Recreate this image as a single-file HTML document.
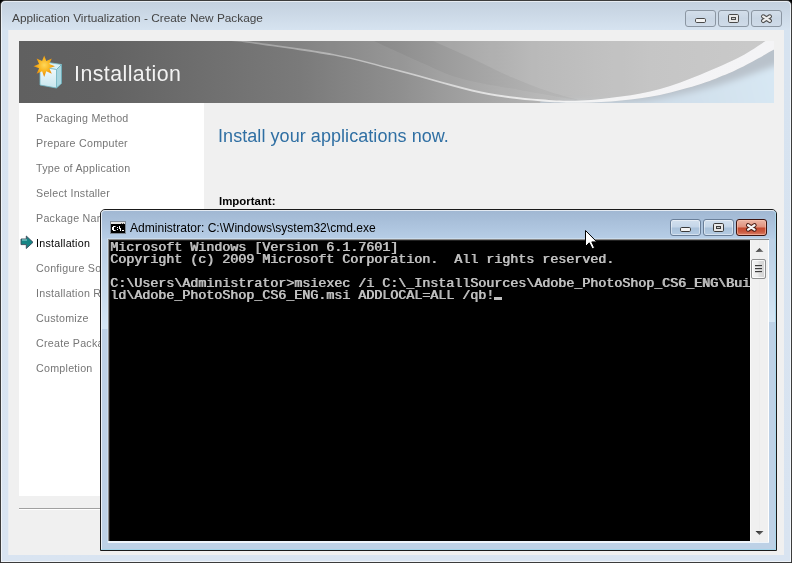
<!DOCTYPE html>
<html><head><meta charset="utf-8">
<style>
*{margin:0;padding:0;box-sizing:border-box}
html,body{width:792px;height:563px;overflow:hidden;background:#000}
.gs{will-change:transform}
body{position:relative;font-family:"Liberation Sans",sans-serif}
.a{position:absolute}
.t{position:absolute;white-space:nowrap;line-height:1;will-change:transform}
#win{left:0;top:0;width:792px;height:563px;border:1px solid #3c3c3c;border-radius:5px 5px 0 0;
 background:linear-gradient(#c3d0de 0px,#d6e3f0 29px,#d7e3f0 60px,#d9e4f1 563px)}
#winhl{left:1px;top:1px;width:790px;height:561px;border:1px solid rgba(255,255,255,.6);border-radius:4px 4px 0 0}
#client{left:8px;top:30px;width:776px;height:525px;background:#f0f0f0;border-left:1px solid #e9edf2}
.btn{position:absolute;height:17px;width:31px;border:1px solid #8b96a2;border-radius:3px;background:linear-gradient(#d3deea,#c9d6e4 50%,#cfdbe8)}
.abtn{position:absolute;height:17px;width:31px;border:1px solid #6a7f99;border-radius:3px;box-shadow:inset 0 0 0 1px rgba(255,255,255,.45);background:linear-gradient(#d2e0ee 0,#c4d5e8 7px,#a9c1da 8px,#b5cce3 15px,#c8dbee 17px)}
.cbtn{position:absolute;height:17px;width:31px;border:1px solid #3e1510;border-radius:3px;box-shadow:inset 0 0 0 1px rgba(255,200,180,.55);background:linear-gradient(#ebb6a6 0,#e0927e 7px,#c4492e 8px,#cc5c42 12px,#e09078 16px)}
.nav{position:absolute;white-space:nowrap;line-height:1;will-change:transform;left:36px;font-size:10.7px;letter-spacing:0.25px;color:#767676}
#con{position:absolute;left:110px;top:242px;font-family:"Liberation Mono",monospace;font-size:13.333px;line-height:12px;color:#c0c0c0;white-space:pre;font-weight:normal;text-shadow:0.8px 0 0 #c0c0c0}
</style></head><body>
<div id="win" class="a"></div>
<div id="winhl" class="a"></div>
<div class="t" style="left:12px;top:13px;font-size:11.83px;color:#444">Application Virtualization - Create New Package</div>
<div class="btn" style="left:685px;top:10px"></div>
<div class="btn" style="left:718px;top:10px"></div>
<div class="btn" style="left:751px;top:10px"></div>
<svg class="a" style="left:685px;top:10px" width="97" height="17" viewBox="0 0 97 17">
 <rect x="10.5" y="8.5" width="10" height="4" rx="1.2" fill="#f4f4f4" stroke="#4a4a4a" stroke-width="1"/>
 <rect x="43.5" y="4.5" width="10" height="8" rx="1.2" fill="#e8e8e8" stroke="#4a4a4a" stroke-width="1"/>
 <rect x="46.5" y="7.5" width="4" height="2" fill="#d0d0d0" stroke="#4a4a4a" stroke-width="1"/>
 <path d="M78.2 6.4 L84.8 10.9 M84.8 6.4 L78.2 10.9" stroke="#505050" stroke-width="4.3" stroke-linecap="round"/><path d="M78.2 6.4 L84.8 10.9 M84.8 6.4 L78.2 10.9" stroke="#eeeeee" stroke-width="2.3" stroke-linecap="round"/>
</svg>
<div id="client" class="a"></div>
<!-- banner -->
<svg class="a" style="left:19px;top:41px" width="755" height="62" viewBox="0 0 755 62">
 <defs>
  <linearGradient id="bg" x1="0" x2="755" y1="0" y2="0" gradientUnits="userSpaceOnUse">
   <stop offset="0" stop-color="#606060"/>
   <stop offset="0.107" stop-color="#626262"/>
   <stop offset="0.372" stop-color="#7a7a7a"/>
   <stop offset="0.505" stop-color="#8f8f8f"/>
   <stop offset="0.56" stop-color="#9b9b9b"/>
   <stop offset="0.69" stop-color="#b3b3b3"/>
   <stop offset="0.836" stop-color="#bfbfbf"/>
   <stop offset="1" stop-color="#c4c4c4"/>
  </linearGradient>
  <linearGradient id="bandg" x1="220" x2="755" y1="0" y2="0" gradientUnits="userSpaceOnUse">
   <stop offset="0" stop-color="#fff" stop-opacity="0.3"/>
   <stop offset="0.33" stop-color="#fff" stop-opacity="0.55"/>
   <stop offset="0.6" stop-color="#fff" stop-opacity="0.8"/>
   <stop offset="0.8" stop-color="#f6f6f8" stop-opacity="0.95"/>
   <stop offset="1" stop-color="#f4f4f6" stop-opacity="1"/>
  </linearGradient>
  <linearGradient id="blu" x1="560" x2="755" y1="62" y2="10" gradientUnits="userSpaceOnUse">
   <stop offset="0" stop-color="#cbd7e1"/>
   <stop offset="0.5" stop-color="#d0dfeb"/>
   <stop offset="1" stop-color="#d8e8f4"/>
  </linearGradient>
  <filter id="blr" x="-5%" y="-20%" width="110%" height="140%"><feGaussianBlur stdDeviation="3"/></filter>
 </defs>
 <rect width="755" height="62" fill="url(#bg)"/>
 <path d="M353.0 -1.0 C361.1 2.7 386.8 14.8 401.6 21.2 C416.4 27.6 425.4 32.8 442.0 37.4 C458.6 42.0 481.0 45.3 501.0 49.0 C521.0 52.7 551.7 57.8 561.8 59.6 C555.1 59.4 538.0 59.8 521.4 58.3 C504.8 56.8 485.5 55.3 462.2 50.5 C438.9 45.7 406.0 35.6 381.4 29.3 C356.8 23.0 340.9 17.9 314.6 12.9 C288.3 7.9 238.8 1.7 223.7 -0.5 Z" fill="#fff" opacity="0.07"/>
 <path d="M411.7 -1.0 C418.4 2.0 438.6 10.8 452.0 17.0 C465.4 23.2 479.0 30.4 492.0 36.0 C505.0 41.6 518.4 46.6 530.0 50.5 C541.6 54.4 556.5 58.1 561.8 59.6 C568.5 58.9 588.8 57.5 602.0 55.6 C615.2 53.7 627.7 51.7 641.0 48.0 C654.3 44.3 668.3 38.9 681.8 33.4 C695.3 27.9 711.2 20.9 722.2 15.2 C733.2 9.5 743.7 1.7 748.0 -1.0 Z" fill="#fff" opacity="0.10"/>
 <path d="M762.0 4.0 C760.8 4.8 761.7 4.8 755.0 8.6 C748.3 12.3 730.9 22.0 722.0 26.5 C713.1 31.0 708.3 32.9 701.6 35.6 C694.9 38.4 691.9 39.9 681.8 43.0 C671.7 46.1 654.3 51.2 641.0 54.0 C627.7 56.8 615.2 58.2 602.0 59.5 C588.8 60.8 575.2 61.7 561.8 61.8 C548.4 61.9 528.1 60.5 521.4 60.3 L521 63 L762 63 Z" fill="#b9c2cb"/>
 <path d="M540.0 62.5 C550.3 62.3 585.2 62.3 602.0 61.5 C618.8 60.7 624.4 60.5 641.0 57.5 C657.6 54.5 682.6 48.9 701.6 43.5 C720.6 38.1 742.8 29.2 755.0 25.0 C767.2 20.8 771.7 19.2 775.0 18.0 L775 75 L540 75 Z" fill="url(#blu)" filter="url(#blr)"/>
 <path d="M223.7 -0.5 C238.8 1.7 288.3 7.9 314.6 12.9 C340.9 17.9 356.8 23.0 381.4 29.3 C406.0 35.6 438.9 45.7 462.2 50.5 C485.5 55.3 504.8 56.8 521.4 58.3 C538.0 59.8 548.4 60.0 561.8 59.6 C575.2 59.2 588.8 57.5 602.0 55.6 C615.2 53.7 627.7 51.7 641.0 48.0 C654.3 44.3 668.3 38.9 681.8 33.4 C695.3 27.9 711.2 20.9 722.2 15.2 C733.2 9.5 743.7 1.7 748.0 -1.0 L762 -1 L762 4 C760.8 4.8 761.7 4.8 755.0 8.6 C748.3 12.3 730.9 22.0 722.0 26.5 C713.1 31.0 708.3 32.9 701.6 35.6 C694.9 38.4 691.9 39.9 681.8 43.0 C671.7 46.1 654.3 51.2 641.0 54.0 C627.7 56.8 615.2 58.2 602.0 59.5 C588.8 60.8 575.2 61.7 561.8 61.8 C548.4 61.9 538.0 61.8 521.4 60.3 C504.8 58.8 485.5 57.4 462.2 52.5 C438.9 47.6 406.0 37.3 381.4 31.0 C356.8 24.7 341.2 19.6 314.6 14.6 C288.0 9.6 237.4 3.1 222.0 0.8 L200 -1 Z" fill="url(#bandg)"/>
</svg>
<svg class="a" style="left:30px;top:52px" width="36" height="40" viewBox="0 0 36 40">
 <defs>
  <linearGradient id="bf" x1="0" x2="0" y1="0" y2="1"><stop offset="0" stop-color="#f2fbfd"/><stop offset="1" stop-color="#c8e6ee"/></linearGradient>
  <radialGradient id="st" cx="0.5" cy="0.45" r="0.5"><stop offset="0" stop-color="#ffd85a"/><stop offset="0.6" stop-color="#f8b21c"/><stop offset="1" stop-color="#e88a0a"/></radialGradient>
 </defs>
 <path d="M10 15 L15 10 L31.5 12.5 L26.5 17.5 Z" fill="#d8eff5" stroke="#7cc0cc" stroke-width="0.8"/>
 <path d="M26.5 17.5 L31.5 12.5 L31.5 31.5 L26.5 36 Z" fill="#a8d6e0" stroke="#6cb0bc" stroke-width="0.8"/>
 <path d="M10 15 L26.5 17.5 L26.5 36 L10 33 Z" fill="url(#bf)" stroke="#74b8c4" stroke-width="0.8"/>
 <path d="M14.2 3.5 L16.3 9.1 L21.8 6.6 L19.3 12.1 L24.9 14.2 L19.3 16.3 L21.8 21.8 L16.3 19.3 L14.2 24.9 L12.1 19.3 L6.6 21.8 L9.1 16.3 L3.5 14.2 L9.1 12.1 L6.6 6.6 L12.1 9.1 Z" fill="url(#st)"/>
</svg>
<div class="t" style="left:74px;top:64px;font-size:21.33px;letter-spacing:0.45px;color:#f2f2f2">Installation</div>
<!-- nav -->
<div class="a" style="left:19px;top:103px;width:185px;height:393px;background:#fff"></div>
<div class="a" style="left:19px;top:508px;width:755px;height:1px;background:#a0a0a0"></div><div class="a" style="left:19px;top:509px;width:755px;height:1px;background:#fff"></div>
<div class="nav" style="top:113px">Packaging Method</div>
<div class="nav" style="top:138px">Prepare Computer</div>
<div class="nav" style="top:163px">Type of Application</div>
<div class="nav" style="top:188px">Select Installer</div>
<div class="nav" style="top:213px">Package Name</div>
<svg class="a" style="left:18px;top:232px" width="20" height="20" viewBox="0 0 20 20">
 <path d="M3 7 L8.3 7 L8.3 4 L15 10.3 L8.3 16.5 L8.3 12.6 L3 12.6 Z" fill="#178585" stroke="#3a4a5a" stroke-width="0.9" stroke-linejoin="round"/>
 <path d="M4 8 L9 8" stroke="#9ee0e0" stroke-width="1"/>
</svg>
<div class="nav" style="top:238px;color:#000">Installation</div>
<div class="nav" style="top:263px">Configure Software</div>
<div class="nav" style="top:288px">Installation Report</div>
<div class="nav" style="top:313px">Customize</div>
<div class="nav" style="top:338px">Create Package</div>
<div class="nav" style="top:363px">Completion</div>
<!-- content -->
<div class="t" style="left:218px;top:127px;font-size:18px;letter-spacing:0.06px;color:#2f6fa3">Install your applications now.</div>
<div class="t" style="left:219px;top:196px;font-size:11.43px;font-weight:bold;color:#000">Important:</div>

<!-- cmd window -->
<div class="a" style="left:100px;top:209px;width:677px;height:342px;border:1px solid #1a1a1a;border-radius:5px 5px 0 0;background:linear-gradient(#a0b7d2 0,#b6cde6 28px,#bdd1e6 30px,#bdd1e6 342px)"></div>
<div class="a" style="left:101px;top:210px;width:675px;height:340px;border:1px solid rgba(255,255,255,.7);border-right-color:#a9d6ea;border-bottom-color:#a3d4ea;border-radius:4px 4px 0 0"></div>
<svg class="a" style="left:110px;top:221px" width="16" height="13" viewBox="0 0 16 13" shape-rendering="crispEdges">
 <rect x="0" y="0" width="16" height="13" fill="#7f8a96"/>
 <rect x="1" y="1" width="14" height="11" fill="#000"/>
 <rect x="1" y="1" width="14" height="2" fill="#e4e4e4"/>
 <rect x="11" y="2" width="1" height="1" fill="#606060"/><rect x="13" y="2" width="1" height="1" fill="#606060"/>
 <g fill="#fff">
  <rect x="3" y="5" width="2" height="1"/><rect x="2" y="6" width="2" height="3"/><rect x="5" y="5" width="1" height="1" opacity=".6"/><rect x="5" y="9" width="1" height="1" opacity=".6"/><rect x="3" y="9" width="2" height="1"/>
  <rect x="7" y="6" width="1" height="1"/><rect x="7" y="8" width="1" height="1"/>
  <rect x="9" y="5" width="1" height="3"/><rect x="10" y="7" width="1" height="3"/>
  <rect x="12" y="9" width="2" height="1"/>
 </g>
</svg>
<div class="t gs" style="left:130px;top:222px;font-size:12.06px;color:#000">Administrator: C:\Windows\system32\cmd.exe</div>
<div class="abtn" style="left:670px;top:219px"></div>
<div class="abtn" style="left:703px;top:219px"></div>
<div class="cbtn" style="left:736px;top:219px"></div>
<svg class="a" style="left:670px;top:219px" width="97" height="17" viewBox="0 0 97 17">
 <rect x="10.5" y="8.5" width="10" height="4" rx="1.2" fill="#f4f4f4" stroke="#3a3a3a" stroke-width="1"/>
 <rect x="43.5" y="4.5" width="10" height="8" rx="1.2" fill="#e8e8e8" stroke="#3a3a3a" stroke-width="1"/>
 <rect x="46.5" y="7.5" width="4" height="2" fill="#c8c8c8" stroke="#3a3a3a" stroke-width="1"/>
 <path d="M78.1 6.3 L84.5 10.6 M84.5 6.3 L78.1 10.6" stroke="#4a1c14" stroke-width="4.3" stroke-linecap="round"/><path d="M78.1 6.3 L84.5 10.6 M84.5 6.3 L78.1 10.6" stroke="#f6f6f6" stroke-width="2.3" stroke-linecap="round"/>
</svg>
<div class="a" style="left:107px;top:238px;width:663px;height:1px;background:#c9dcee"></div><div class="a" style="left:107px;top:238px;width:1px;height:305px;background:#c9dcee"></div>
<div class="a" style="left:108px;top:239px;width:661px;height:1px;background:#8a8a8a"></div><div class="a" style="left:108px;top:239px;width:1px;height:303px;background:#8a8a8a"></div>
<div class="a" style="left:109px;top:240px;width:641px;height:301px;background:#000;border-top:1px solid #222;border-left:1px solid #222"></div>
<div class="a" style="left:108px;top:541px;width:661px;height:2px;background:#eef4fa"></div>
<svg class="a" style="left:750px;top:240px" width="19" height="302" viewBox="0 0 19 302">
 <defs>
  <linearGradient id="th" x1="0" x2="1" y1="0" y2="0"><stop offset="0" stop-color="#f4f4f4"/><stop offset="0.45" stop-color="#ececec"/><stop offset="0.55" stop-color="#dedede"/><stop offset="1" stop-color="#d2d2d2"/></linearGradient>
  <linearGradient id="ar" x1="0" x2="1" y1="0" y2="1"><stop offset="0" stop-color="#202020"/><stop offset="1" stop-color="#8a8a8a"/></linearGradient>
 </defs>
 <rect x="0" y="0" width="19" height="302" fill="#f0f0f0"/>
 <rect x="0" y="0" width="1" height="302" fill="#f8f8f8"/>
 <rect x="9" y="0" width="1" height="302" fill="#ededed"/>
 <rect x="18" y="0" width="1" height="302" fill="#ffffff"/>
 <path d="M5.5 12 L9.5 8 L13.5 12 Z" fill="url(#ar)"/>
 <rect x="1.5" y="19.5" width="14" height="19" rx="1.5" fill="url(#th)" stroke="#8e8f8f"/>
 <rect x="2.5" y="20.5" width="12" height="17" rx="1" fill="none" stroke="#fff" stroke-opacity=".8"/>
 <path d="M5 25.5h7M5 28.5h7M5 31.5h7" stroke="#3c3c3c" stroke-width="1"/>
 <path d="M5 26.5h7M5 29.5h7M5 32.5h7" stroke="#c8c8c8" stroke-width="1"/>
 <path d="M5.5 291 L9.5 295 L13.5 291 Z" fill="url(#ar)"/>
</svg>
<div id="con" class="gs">Microsoft Windows [Version 6.1.7601]
Copyright (c) 2009 Microsoft Corporation.  All rights reserved.

C:\Users\Administrator&gt;msiexec /i C:\_InstallSources\Adobe_PhotoShop_CS6_ENG\Bui
ld\Adobe_PhotoShop_CS6_ENG.msi ADDLOCAL=ALL /qb!</div>
<div class="a" style="left:494px;top:297px;width:8px;height:3px;background:#c0c0c0"></div>
<div class="a" style="left:769px;top:250px;width:6px;height:72px;background:linear-gradient(rgba(220,236,248,0),rgba(220,236,248,.75))"></div>
<div class="a" style="left:102px;top:255px;width:6px;height:74px;background:linear-gradient(rgba(220,236,248,0),rgba(222,238,250,.7))"></div>
<!-- cursor -->
<svg class="a" style="left:584px;top:229px" width="14" height="22" viewBox="0 0 14 22">
 <path d="M1.5 1.5 L1.5 17.5 L5.2 13.8 L8.2 19.8 L10.6 18.8 L7.8 12.9 L12.8 12.9 Z" fill="#fff" stroke="#000" stroke-width="1" stroke-linejoin="miter"/>
</svg>
</body></html>
